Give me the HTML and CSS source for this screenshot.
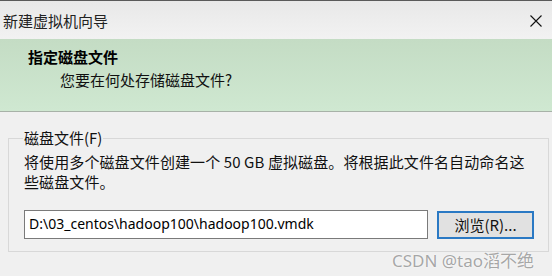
FILE: index.html
```html
<!DOCTYPE html>
<html>
<head>
<meta charset="utf-8">
<link rel="stylesheet" href="styles.css">
</head>
<body>
<div class="window">
  <div class="titlebar">
    <span class="title">新建虚拟机向导</span>
    <svg class="close" width="12" height="12" viewBox="0 0 12 12"><path d="M0.5 0.5 L11.5 11.5 M11.5 0.5 L0.5 11.5" stroke="#111" stroke-width="1.1" fill="none"/></svg>
  </div>
  <div class="header">
    <div class="h-title">指定磁盘文件</div>
    <div class="h-sub">您要在何处存储磁盘文件?</div>
  </div>
  <div class="body">
    <fieldset class="group">
      <legend class="legend">磁盘文件(F)</legend>
      <p class="desc">将使用多个磁盘文件创建一个 50 GB 虚拟磁盘。将根据此文件名自动命名这些磁盘文件。</p>
      <div class="row">
        <div class="input">D:\03_centos\hadoop100\hadoop100.vmdk</div>
        <div class="btn">浏览(R)...</div>
      </div>
    </fieldset>
  </div>
  <div class="watermark">CSDN @tao滔不绝</div>
</div>
</body>
</html>
```
FILE: styles.css
```css
html, body {
  margin: 0;
  padding: 0;
  width: 552px;
  height: 276px;
  overflow: hidden;
  background: #f0f0f0;
  font-family: "Noto Sans", "Noto Sans CJK SC", sans-serif;
  color: #000;
}
.window {
  position: relative;
  width: 552px;
  height: 276px;
  display: flex;
  flex-direction: column;
}
.titlebar {
  border-top: 1px solid #5a5a5a;
  background: linear-gradient(#e8e8e8, #f2f2f2);
  display: flex;
  align-items: center;
  justify-content: space-between;
  padding: 0 10px 0 3px;
  box-sizing: border-box;
  height: 39px;
}
.title {
  font-family: "Noto Sans CJK SC", sans-serif;
  font-size: 15px;
  color: #222;
  margin-top: 1px;
}
.close {
  display: block;
  margin-top: 1px;
}
.header {
  background: linear-gradient(#c4dcc4, #cfe8d1);
  border-bottom: 1px solid #a8b2a8;
  box-sizing: border-box;
  height: 73px;
  font-family: "Noto Sans CJK SC", sans-serif;
  font-size: 15px;
}
.h-title {
  font-weight: bold;
  margin: 7px 0 0 28px;
  line-height: 22px;
}
.h-sub {
  margin: 1px 0 0 60px;
  line-height: 22px;
  color: #111;
}
.body {
  flex: 1;
  padding: 16px 3px 0 8px;
}
.group {
  margin: 0;
  border: 1px solid #d8d8d8;
  padding: 0 14px 0 15px;
  height: 124px;
  box-sizing: border-box;
}
.legend {
  font-family: "Noto Sans CJK SC", sans-serif;
  font-size: 15px;
  padding: 0 1px;
  margin-left: -1px;
  line-height: 20px;
  color: #111;
}
.desc {
  margin: 4px 0 0 0;
  font-family: "Noto Sans CJK SC", sans-serif;
  font-size: 15px;
  line-height: 20px;
  color: #111;
  letter-spacing: 0.1px;
}
.row {
  display: flex;
  align-items: center;
  margin-top: 18px;
}
.input {
  width: 404px;
  height: 29px;
  box-sizing: border-box;
  border: 1px solid #7a7a7a;
  background: #fff;
  font-size: 14px;
  line-height: 26px;
  padding-left: 4px;
  color: #000;
}
.btn {
  margin-left: 9px;
  width: 97px;
  height: 28px;
  box-sizing: border-box;
  border: 2px solid #2a79c4;
  background: #e1e1e1;
  font-family: "Noto Sans CJK SC", sans-serif;
  font-size: 15px;
  display: flex;
  align-items: center;
  justify-content: center;
  color: #111;
}
.watermark {
  position: absolute;
  left: 392px;
  top: 247px;
  font-family: "Noto Sans", "Noto Sans CJK SC", sans-serif;
  font-size: 17px;
  color: rgba(130, 130, 130, 0.7);
  text-shadow: 0 0 2px #fff;
}
```
